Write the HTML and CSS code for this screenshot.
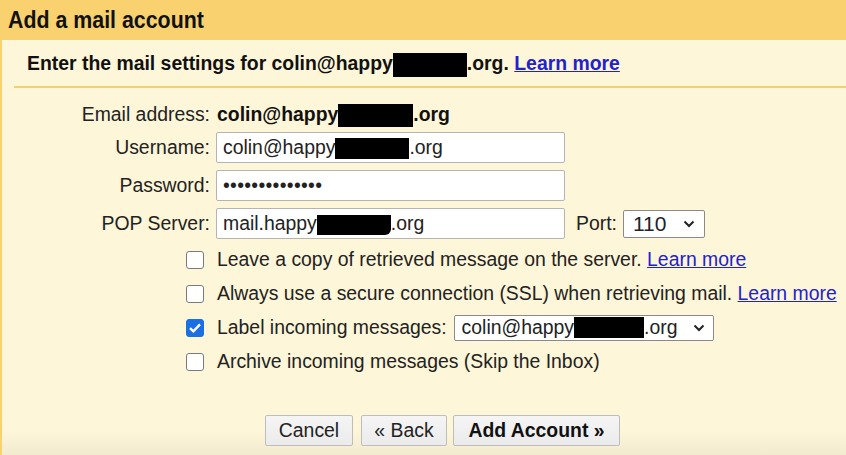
FILE: index.html
```html
<!DOCTYPE html>
<html>
<head>
<meta charset="utf-8">
<link rel="stylesheet" href="styles.css">
</head>
<body>
<div class="header"><span class="title">Add a mail account</span></div>
<div class="panel">
  <div class="intro">Enter the mail settings for colin@happy<span class="redact r-intro"></span>.org. <a href="#" class="link">Learn more</a></div>
  <div class="rule"></div>
  <div class="form">
    <div class="label">Email address:</div>
    <div class="value">colin@happy<span class="redact r-email"></span>.org</div>

    <div class="label">Username:</div>
    <div class="field"><div class="textbox">colin@happy<span class="redact r-user"></span>.org</div></div>

    <div class="label">Password:</div>
    <div class="field"><div class="textbox"><span class="dots">••••••••••••••</span></div></div>

    <div class="label">POP Server:</div>
    <div class="field">
      <div class="textbox">mail.happy<span class="redact r-pop"></span>.org</div>
      <span class="port-label">Port:</span>
      <div class="select port">110<svg class="chev" width="12" height="8" viewBox="0 0 12 8"><path d="M1.5 1.5 L6 6 L10.5 1.5" fill="none" stroke="#222" stroke-width="2"/></svg></div>
    </div>

    <div class="check-row"><span class="box"></span><span>Leave a copy of retrieved message on the server. <a href="#" class="link">Learn more</a></span></div>
    <div class="check-row"><span class="box"></span><span>Always use a secure connection (SSL) when retrieving mail. <a href="#" class="link">Learn more</a></span></div>
    <div class="check-row"><span class="box checked"><svg width="14" height="12" viewBox="0 0 14 12"><path d="M2 6.2 L5.4 9.4 L12 2.4" fill="none" stroke="#fff" stroke-width="2.4"/></svg></span><span>Label incoming messages:</span>
      <div class="select labelsel">colin@happy<span class="redact r-sel"></span>.org<svg class="chev" width="12" height="8" viewBox="0 0 12 8"><path d="M1.5 1.5 L6 6 L10.5 1.5" fill="none" stroke="#222" stroke-width="2"/></svg></div>
    </div>
    <div class="check-row"><span class="box"></span><span>Archive incoming messages (Skip the Inbox)</span></div>
  </div>
  <div class="buttons">
    <button class="btn b-cancel">Cancel</button>
    <button class="btn b-back">« Back</button>
    <button class="btn primary">Add Account »</button>
  </div>
</div>
</body>
</html>
```
FILE: styles.css
```css
html, body {
  margin: 0;
  padding: 0;
}
body {
  width: 846px;
  height: 455px;
  overflow: hidden;
  background: linear-gradient(to bottom, #fef6d9 0, #fef6d9 430px, #f3ebcf 455px);
  font-family: "Liberation Sans", Arial, sans-serif;
  font-size: 19.4px;
  color: #222;
}
.header {
  height: 40px;
  line-height: 40px;
  background: #f9d16e;
  padding-left: 8px;
  font-weight: bold;
  font-size: 24px;
  color: #111;
}
.title {
  display: inline-block;
  transform: scaleX(0.89);
  transform-origin: left center;
}
.panel {
  border-left: 2px solid #f9d16e;
  height: 415px;
}
.intro {
  height: 46px;
  line-height: 46px;
  padding-left: 25px;
  font-weight: bold;
  color: #111;
  white-space: nowrap;
}
.link {
  color: #2222cc;
  text-decoration: underline;
}
.rule {
  height: 2px;
  margin-left: 12px;
  background: #f7cf6a;
}
.redact {
  display: inline-block;
  background: #000;
  vertical-align: middle;
}
.r-intro { width: 74px; height: 24px; }
.r-email { width: 75px; height: 23px; }
.r-user { width: 74px; height: 21px; }
.r-pop { width: 74px; height: 20px; border-radius: 0 0 6px 0; }
.r-sel { width: 70px; height: 21px; }
.form {
  display: grid;
  grid-template-columns: 208px 1fr;
  column-gap: 6px;
  row-gap: 7px;
  padding-top: 15px;
  align-items: center;
}
.label {
  text-align: right;
  white-space: nowrap;
}
.value {
  font-weight: bold;
  margin-left: 1px;
  height: 22px;
  line-height: 22px;
  color: #111;
}
.form > .label:first-child {
  height: 22px;
  line-height: 22px;
}
.field {
  display: flex;
  align-items: center;
}
.textbox {
  box-sizing: border-box;
  width: 349px;
  height: 31px;
  line-height: 29px;
  border: 1px solid #b4b4b4;
  border-radius: 2px;
  background: #fff;
  padding-left: 6px;
  white-space: nowrap;
}
.dots {
  letter-spacing: 0.3px;
}
.port-label {
  margin-left: 11px;
}
.select {
  box-sizing: border-box;
  display: flex;
  align-items: center;
  background: #fff;
  border: 1px solid #8a8a8a;
  border-radius: 2px;
  white-space: nowrap;
}
.port {
  width: 82px;
  height: 28px;
  margin-left: 6px;
  padding-left: 9px;
  font-size: 21px;
}
.port .chev {
  margin-left: auto;
  margin-right: 9px;
}
.check-row {
  grid-column: 1 / -1;
  display: flex;
  align-items: center;
  height: 27px;
  padding-left: 184px;
  white-space: nowrap;
}
.box {
  box-sizing: border-box;
  width: 18px;
  height: 18px;
  border: 1px solid #7a7a7a;
  border-radius: 3px;
  background: #fff;
  margin-right: 13px;
  flex: none;
  display: flex;
  align-items: center;
  justify-content: center;
}
.box.checked {
  background: #1a6fe3;
  border-color: #1a6fe3;
}
.labelsel {
  width: 260px;
  height: 26px;
  margin-left: 7px;
  padding-left: 7px;
}
.labelsel .chev {
  margin-left: auto;
  margin-right: 8px;
}
.buttons {
  display: flex;
  gap: 8px;
  padding-left: 263px;
  margin-top: 40px;
}
.btn {
  height: 31px;
  padding: 0;
  font-family: "Liberation Sans", Arial, sans-serif;
  font-size: 19.4px;
  color: #222;
  background: linear-gradient(#f5f5f5, #ebebeb);
  border: 1px solid #bdbdbd;
  border-radius: 2px;
}
.b-cancel { width: 88px; }
.b-back { width: 86px; }
.btn.primary {
  width: 167px;
  margin-left: -2px;
  font-weight: bold;
  color: #111;
}
```
